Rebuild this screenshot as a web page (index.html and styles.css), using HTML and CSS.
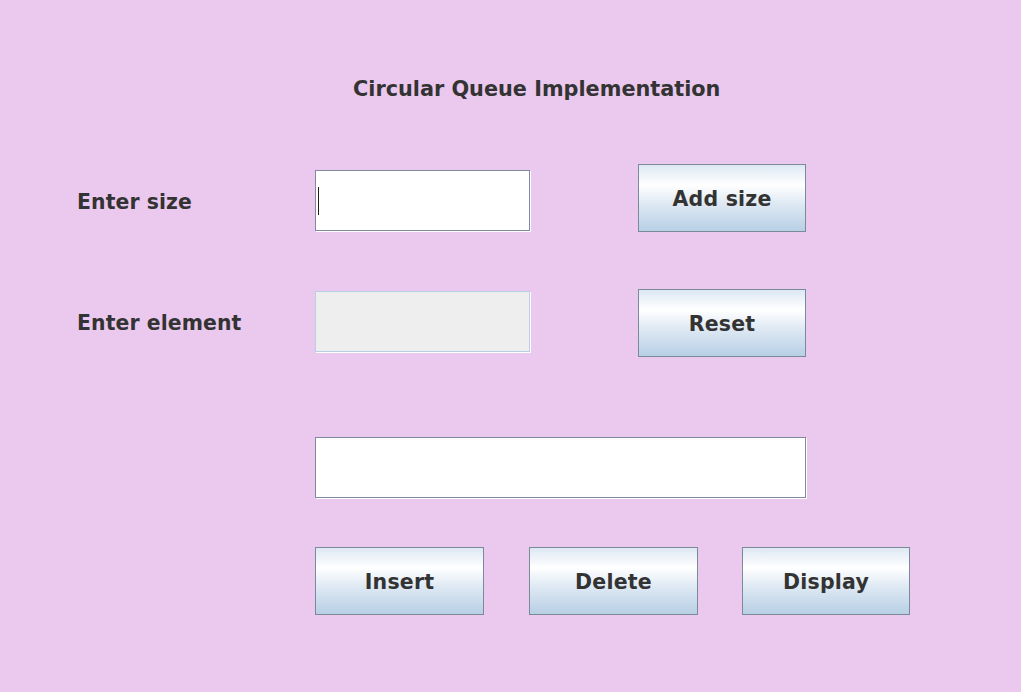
FILE: index.html
```html
<!DOCTYPE html>
<html>
<head>
<meta charset="utf-8">
<link rel="stylesheet" href="styles.css">
</head>
<body>
<div class="frame">
  <h1 class="title">Circular Queue Implementation</h1>
  <div class="row row-size">
    <span class="label label-size">Enter size</span>
    <div class="field field-size"><span class="caret"></span></div>
    <button class="btn btn-side">Add size</button>
  </div>
  <div class="row row-elem">
    <span class="label label-elem">Enter element</span>
    <div class="field field-disabled"></div>
    <button class="btn btn-side">Reset</button>
  </div>
  <div class="row row-out">
    <div class="field field-wide"></div>
  </div>
  <div class="row row-actions">
    <button class="btn btn-action">Insert</button>
    <button class="btn btn-action">Delete</button>
    <button class="btn btn-action btn-last">Display</button>
  </div>
</div>
</body>
</html>
```
FILE: styles.css
```css
html, body {
  margin: 0;
  padding: 0;
}
body {
  background: #ebc8ee;
  width: 1021px;
  height: 692px;
  overflow: hidden;
  font-family: "DejaVu Sans", sans-serif;
  font-weight: bold;
  color: #333333;
}
.frame {
  padding-left: 77px;
  display: flex;
  flex-direction: column;
}
.title {
  margin: 0;
  padding-top: 77px;
  padding-left: 276px;
  font-size: 20.8px;
  line-height: 24px;
  font-weight: bold;
}
.row {
  display: flex;
  align-items: flex-start;
}
.row-size { margin-top: 63px; }
.row-elem { margin-top: 57px; }
.row-out { margin-top: 80px; padding-left: 238px; }
.row-actions { margin-top: 49px; padding-left: 238px; gap: 45px; }

.label {
  width: 238px;
  font-size: 20.4px;
  letter-spacing: 0.1px;
  line-height: 24px;
}
.label-size { margin-top: 26px; }
.label-elem { margin-top: 22px; }

.field {
  box-sizing: border-box;
  width: 215px;
  height: 61px;
  background: #ffffff;
  border: 1px solid #7f8a9e;
  box-shadow: 1px 1px 0 #ffffff;
  position: relative;
}
.field-size { margin-top: 6px; }
.field-disabled {
  margin-top: 2px;
  background: #eeeeee;
  border-color: #b8cfe5;
}
.field-wide {
  width: 491px;
}
.caret {
  position: absolute;
  left: 2px;
  top: 16px;
  width: 1px;
  height: 28px;
  background: #222222;
}

.btn {
  box-sizing: border-box;
  width: 168px;
  height: 68px;
  margin: 0;
  padding: 2px 0 0 0;
  border: 1px solid #7a8a99;
  background: linear-gradient(to bottom, #dde8f3 0%, #ffffff 30%, #dde8f3 60%, #b8cfe5 100%);
  font-family: "DejaVu Sans", sans-serif;
  font-weight: bold;
  font-size: 20.5px;
  letter-spacing: 0.2px;
  color: #333333;
  text-align: center;
}
.btn-side { margin-left: 108px; }
.btn-action { width: 169px; }
.btn-last { width: 168px; margin-left: -1px; }
```
